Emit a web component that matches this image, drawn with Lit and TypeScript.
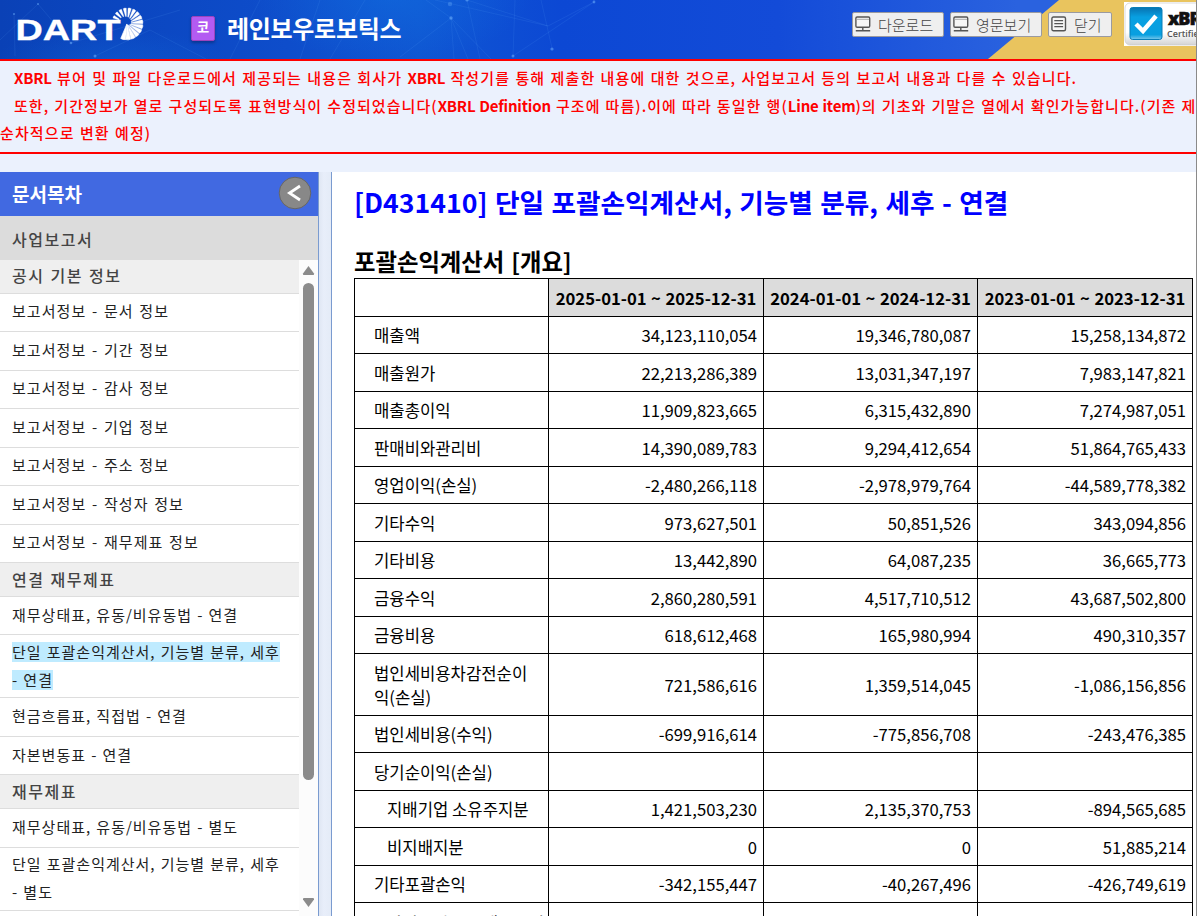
import { LitElement, html, css, svg } from "lit";
import { customElement } from "lit/decorators.js";

type Entry = { t: string; h: number; head?: boolean; on?: boolean };
const toc: Entry[] = [
  { t: "공시 기본 정보", h: 34, head: true },
  { t: "보고서정보 - 문서 정보", h: 38 },
  { t: "보고서정보 - 기간 정보", h: 39 },
  { t: "보고서정보 - 감사 정보", h: 38 },
  { t: "보고서정보 - 기업 정보", h: 39 },
  { t: "보고서정보 - 주소 정보", h: 38 },
  { t: "보고서정보 - 작성자 정보", h: 39 },
  { t: "보고서정보 - 재무제표 정보", h: 38 },
  { t: "연결 재무제표", h: 34, head: true },
  { t: "재무상태표, 유동/비유동법 - 연결", h: 38 },
  { t: "단일 포괄손익계산서, 기능별 분류, 세후|- 연결", h: 63, on: true },
  { t: "현금흐름표, 직접법 - 연결", h: 39 },
  { t: "자본변동표 - 연결", h: 38 },
  { t: "재무제표", h: 34, head: true },
  { t: "재무상태표, 유동/비유동법 - 별도", h: 39 },
  { t: "단일 포괄손익계산서, 기능별 분류, 세후|- 별도", h: 63 },
];

const rows: [string, number, string, string, string, number?][] = [
  ["매출액", 37, "34,123,110,054", "19,346,780,087", "15,258,134,872"],
  ["매출원가", 38, "22,213,286,389", "13,031,347,197", "7,983,147,821"],
  ["매출총이익", 37, "11,909,823,665", "6,315,432,890", "7,274,987,051"],
  ["판매비와관리비", 38, "14,390,089,783", "9,294,412,654", "51,864,765,433"],
  ["영업이익(손실)", 37, "-2,480,266,118", "-2,978,979,764", "-44,589,778,382"],
  ["기타수익", 38, "973,627,501", "50,851,526", "343,094,856"],
  ["기타비용", 37, "13,442,890", "64,087,235", "36,665,773"],
  ["금융수익", 38, "2,860,280,591", "4,517,710,512", "43,687,502,800"],
  ["금융비용", 37, "618,612,468", "165,980,994", "490,310,357"],
  ["법인세비용차감전순이|익(손실)", 62, "721,586,616", "1,359,514,045", "-1,086,156,856"],
  ["법인세비용(수익)", 37, "-699,916,614", "-775,856,708", "-243,476,385"],
  ["당기순이익(손실)", 38, "", "", ""],
  ["지배기업 소유주지분", 37, "1,421,503,230", "2,135,370,753", "-894,565,685", 1],
  ["비지배지분", 38, "0", "0", "51,885,214", 1],
  ["기타포괄손익", 37, "-342,155,447", "-40,267,496", "-426,749,619"],
  ["당기손익으로 재분류될|수 없는 항목", 64, "", "", "", 1],
];

const lines = (t: string) => t.split("|").map((s, i) => (i ? html`<br /><span>${s}</span>` : html`<span>${s}</span>`));

const rays = Array.from({ length: 16 }, (_, i) => {
  const a = ((-172 + i * 18.4) * Math.PI) / 180;
  const w = 0.085 + i * 0.0045;
  const r = 15 + i * 0.08;
  const inner = 9.5 - i * 0.6;
  const cx = 127, cy = 23.5;
  const p = (rad: number, ang: number) => `${(cx + rad * Math.cos(ang)).toFixed(2)},${(cy + rad * Math.sin(ang)).toFixed(2)}`;
  return svg`<polygon points="${p(inner, a - 0.06)} ${p(r, a - w)} ${p(r + 0.3, a)} ${p(r, a + w)} ${p(inner, a + 0.06)}" stroke="#fff" stroke-width="${0.2 + i * 0.03}" />`;
});

const screenIcon = html`<svg width="16" height="17" viewBox="0 0 16 17" fill="none" stroke="#555" stroke-width="1.4">
  <rect x=".9" y="1" width="13.800" height="10.200" rx="1.200" fill="#f6f6f6" /><path d="M1.500 3.300h12.600" stroke="#aaa" stroke-width="1" /><path d="M7.800 11.200v3.500M.8 14.800h14.400" />
</svg>`;
const docIcon = html`<svg width="16" height="17" viewBox="0 0 16 17" fill="none" stroke="#555" stroke-width="1.4">
  <rect x=".9" y="1" width="13.600" height="13.800" rx="1.500" fill="#f6f6f6" /><path d="M3.300 4.700h8.800M3.300 7.700h8.800M3.300 10.700h8.800" stroke-width="1.300" />
</svg>`;

@customElement("app-root")
export class AppRoot extends LitElement {
  static styles = css`
    :host { display: block; width: 1197px; height: 916px; overflow: hidden; background: #ebf1fd; color: #000;
      font-family: "Noto Sans CJK KR", sans-serif; position: relative; box-sizing: border-box; }
    * { box-sizing: border-box; }
    .banner { height: 59px; display: flex; position: relative; overflow: hidden; background: #1148d6; }
    .art { position: absolute; inset: 0; }
    .corp { position: relative; display: flex; align-items: center; margin-left: 191px; height: 56px; }
    .badge { width: 24px; height: 25px; border: 1px solid #9b44bd; border-radius: 2px; background: #b35bf2; color: #fff;
      font-size: 13.5px; font-weight: 700; line-height: 19px; text-align: center; box-shadow: 0 2px 3px #0004; }
    .name { margin-left: 12px; color: #fff; font-size: 24px; font-weight: 700; line-height: 56px; letter-spacing: -.3px; white-space: nowrap; }
    .tools { position: relative; display: flex; gap: 6px; margin: 12px 0 0 auto; padding-right: 85px; }
    .btn { height: 25px; display: flex; align-items: center; gap: 7px; padding: 0 0 0 2px; border: 1px solid #9a9aa0; border-radius: 2px;
      background: #efefef; color: #444; font-size: 15px; font-weight: 300; line-height: 24px; white-space: nowrap; }
    .wide { width: 92px; } .slim { width: 64px; }
    .notice { height: 95px; border-top: 2px solid #f00; border-bottom: 2px solid #f00; padding-top: 3px; color: #f00; font-size: 15px;
      font-weight: 500; line-height: 27.5px; white-space: nowrap; overflow: hidden; letter-spacing: 1.12px; word-spacing: .8px; }
    .ind { padding-left: 14px; }
    .tight { letter-spacing: 1.05px; word-spacing: .7px; }
    .notice b { font-weight: 700; letter-spacing: -.2px; }
    .body { display: flex; height: 744px; margin-top: 18px; }
    .side { width: 319px; border-right: 1px solid #7a9bd0; background: #fff; }
    .shead { height: 44px; background: #4169e1; color: #fff; display: flex; justify-content: space-between; align-items: center; padding: 0 6px 2px 12px;
      font-size: 19px; font-weight: 700; }
    .shead span { padding-top: 1px; }
    .kind { height: 44px; background: #dcdcdc; color: #444; padding-left: 12px; font-size: 16px; font-weight: 500; line-height: 47px; letter-spacing: 1.5px; }
    .scroll { display: flex; height: 656px; }
    .toc { width: 299px; overflow: hidden; }
    .item { display: flex; align-items: center; border-bottom: 1px solid #ddd; padding: 0 0 2px 12px; color: #222; font-size: 15px; line-height: 28px; letter-spacing: 1px; word-spacing: .8px; white-space: nowrap; }
    .info { padding-bottom: 3px; letter-spacing: 1.05px; word-spacing: 1.3px; }
    .head { background: #efefef; color: #444; font-size: 16px; font-weight: 500; letter-spacing: 1.5px; word-spacing: 1px; padding-bottom: 2px; }
    .head:first-child { padding-bottom: 3px; }
    .on span { background: linear-gradient(#bfebff, #bfebff) 0 100% / 100% 20px no-repeat; }
    .on div { padding-top: 1px; }
    .bar { flex: 1; background: #fcfcfc; }
    .gap { width: 13px; background: linear-gradient(90deg, #dfe6f3, #e8eefa 40%, #e4ebf7); border-right: 1px solid #7a9bd0; }
    .main { flex: 1; background: #fff; padding: 9px 0 0 22px; overflow: hidden; }
    h1 { margin: 0; font-size: 26.67px; font-weight: 700; color: #00f; line-height: 42px; height: 59px; white-space: nowrap; word-spacing: 1.4px; }
    h2 { margin: 0; font-size: 23.33px; font-weight: 700; line-height: 42px; height: 38px; white-space: nowrap; word-spacing: 1.6px; }
    .grid { display: grid; grid-template-columns: 194px 215px 214px 215px; border-top: 1px solid #000; border-left: 1px solid #000; width: 839px; font-size: 16.67px; line-height: 24px; }
    .c { display: flex; align-items: center; border-right: 1px solid #000; border-bottom: 1px solid #000; white-space: nowrap; padding: 0 0 0 19px; }
    .num { justify-content: flex-end; padding: 0 6px 0 0; }
    .th { justify-content: center; font-weight: 700; background: #dcdcdc; padding: 0; word-spacing: .7px; }
    .deep { padding-left: 32px; }
    .edge { position: absolute; right: 0; top: 0; width: 1px; height: 916px; background: #8a8a8a; }
  `;

  render() {
    return html`
      <header class="banner">
        <svg class="art" width="1197" height="59" viewBox="0 0 1197 59">
          <defs>
            <linearGradient id="bg"><stop offset="0" stop-color="#0a41b6" /><stop offset=".1" stop-color="#0b46c0" /><stop offset=".24" stop-color="#0e4dcb" /><stop offset=".35" stop-color="#0f56d2" /><stop offset=".47" stop-color="#0c48d4" /><stop offset=".65" stop-color="#134bd8" /><stop offset=".85" stop-color="#2a62df" /></linearGradient>
            <radialGradient id="glow"><stop offset="0" stop-color="#1276e4" stop-opacity=".42" /><stop offset="1" stop-color="#1276e4" stop-opacity="0" /></radialGradient>
            <linearGradient id="blue" x2="0" y2="1"><stop offset="0" stop-color="#0872b0" /><stop offset=".3" stop-color="#08a0e2" /><stop offset=".85" stop-color="#089fe0" /><stop offset="1" stop-color="#7bc8ea" /></linearGradient>
            <linearGradient id="plate" x2="0" y2="1"><stop offset="0" stop-color="#fff" /><stop offset=".7" stop-color="#fff" /><stop offset="1" stop-color="#d4d4d4" /></linearGradient>
          </defs>
          <rect width="1197" height="59" fill="url(#bg)" />
          <ellipse cx="390" cy="-4" rx="140" ry="66" fill="url(#glow)" />
          <ellipse cx="110" cy="64" rx="120" ry="36" fill="url(#glow)" opacity=".7" />
          <g stroke="#6eb4ff" stroke-opacity=".11" fill="none"><path d="M451 18L400 57M451 18L426 0M451 18L454 59M451 18L468 59M451 18L491 59M467 0L480 59M467 0L548 26L594 2L513 56M515 0L513 56M541 0L552 48M435 0L548 26M0 40L38 4L71 43L180 10M95 56L150 30L206 59M260 0L230 59M320 0L300 59M365 0L330 59M14 14L15 56" /></g>
          <g fill="#76b8ff" fill-opacity=".5"><circle cx="451" cy="18" r="1.7" /><circle cx="450" cy="4" r="2.2" opacity=".6" /><circle cx="467" cy="0" r="1.6" /><circle cx="552" cy="49" r="1.6" /><circle cx="513" cy="56" r="1.5" /><circle cx="594" cy="2" r="1.4" /><circle cx="71" cy="43" r="1.3" /><circle cx="95" cy="56" r="1.5" /><circle cx="38" cy="4" r="1" /><circle cx="14" cy="14" r="1" /></g>
          <path d="M1059 0H1197V59H988Z" fill="#e9c45e" />
          <g fill="#fff"><text x="15.500" y="39.700" font-family="Liberation Sans" font-weight="700" font-size="29.500" stroke="#fff" stroke-width=".3" textLength="105" lengthAdjust="spacingAndGlyphs">DART</text>${rays}</g>
          <g><rect x="1124" y="2" width="80" height="44" fill="#fff" /><rect x="1125" y="3" width="90" height="42" rx="5" fill="url(#plate)" stroke="#ccc" stroke-width=".7" />
            <rect x="1130" y="7.500" width="32" height="32" rx="2.500" fill="url(#blue)" stroke="#087eb7" /><path d="M1136 24L1143 31L1156 16" fill="none" stroke="#fff" stroke-width="4.500" />
            <text x="1168" y="25" font-family="Open Sans" font-weight="800" font-size="18" letter-spacing="-1" fill="#111" stroke="#111" stroke-width=".6">xBRL</text>
            <text x="1167" y="37" font-family="Open Sans" font-weight="600" font-size="9" fill="#555">Certified</text></g>
        </svg>
        <div class="corp"><span class="badge">코</span><span class="name">레인보우로보틱스</span></div>
        <div class="tools"><div class="btn wide">${screenIcon}<span>다운로드</span></div><div class="btn wide">${screenIcon}<span>영문보기</span></div><div class="btn slim">${docIcon}<span>닫기</span></div></div>
      </header>
      <section class="notice">
        <div class="ind"><b>XBRL</b> 뷰어 및 파일 다운로드에서 제공되는 내용은 회사가 <b>XBRL</b> 작성기를 통해 제출한 내용에 대한 것으로, 사업보고서 등의 보고서 내용과 다를 수 있습니다.</div>
        <div class="ind tight">또한, 기간정보가 열로 구성되도록 표현방식이 수정되었습니다(<b>XBRL Definition</b> 구조에 따름).이에 따라 동일한 행(<b>Line item</b>)의 기초와 기말은 열에서 확인가능합니다.(기존 제</div>
        <div>순차적으로 변환 예정)</div>
      </section>
      <div class="body">
        <aside class="side">
          <div class="shead"><span>문서목차</span><svg width="34" height="34" viewBox="0 0 34 34"><circle cx="17" cy="17" r="15.800" fill="#888" stroke="#666" /><path d="M22 10L11.500 17L22 24" fill="none" stroke="#fff" stroke-width="2.800" /></svg></div>
          <div class="kind">사업보고서</div>
          <div class="scroll">
            <nav class="toc">${toc.map((e) => html`<div class="item ${e.head ? "head" : ""} ${e.on ? "on" : ""} ${e.t.startsWith("보고서") ? "info" : ""}" style="height:${e.h}px"><div>${lines(e.t)}</div></div>`)}</nav>
            <svg class="bar" width="19" height="656" viewBox="0 0 19 656"><path d="M9.500 6L15 13.500Q15.500 15 14 15H5Q3.500 15 4 13.500Z" fill="#8b8b8b" /><rect x="4" y="23" width="11" height="497" rx="5.500" fill="#8b8b8b" /><path d="M9.500 647L15 639.500Q15.500 638 14 638H5Q3.500 638 4 639.500Z" fill="#8b8b8b" /></svg>
          </div>
        </aside>
        <div class="gap"></div>
        <main class="main">
          <h1>[D431410] 단일 포괄손익계산서, 기능별 분류, 세후 - 연결</h1>
          <h2>포괄손익계산서 [개요]</h2>
          <div class="grid">
            <div class="c" style="height:38px"></div><div class="c th">2025-01-01 ~ 2025-12-31</div><div class="c th">2024-01-01 ~ 2024-12-31</div><div class="c th">2023-01-01 ~ 2023-12-31</div>
            ${rows.map((r) => html`<div class="c ${r[5] ? "deep" : ""}" style="height:${r[1]}px"><div>${lines(r[0])}</div></div>
              <div class="c num">${r[2]}</div><div class="c num">${r[3]}</div><div class="c num">${r[4]}</div>`)}
          </div>
        </main>
      </div>
      <div class="edge"></div>
    `;
  }
}
